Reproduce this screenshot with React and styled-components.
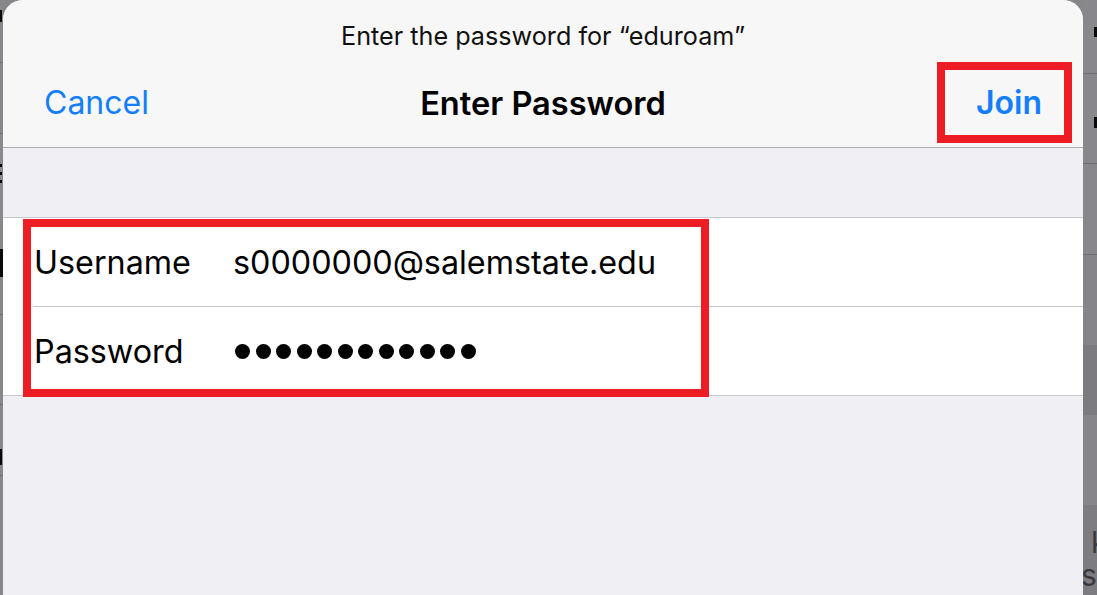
import React from "react";
import styled, { createGlobalStyle } from "styled-components";

const Global = createGlobalStyle`
  html, body { margin: 0; padding: 0; }
  body {
    width: 1097px;
    height: 595px;
    overflow: hidden;
    background: #87878b;
    font-family: Inter, "Liberation Sans", Arial, sans-serif;
    -webkit-font-smoothing: antialiased;
  }
`;

const Screen = styled.div`
  display: flex;
  width: 1097px;
  height: 595px;
`;

const Strip = styled.div`
  display: flex;
  flex-direction: column;
  width: ${(p) => p.$w}px;
  flex: none;
  overflow: hidden;
`;

const StripCell = styled.div`
  height: ${(p) => p.$h}px;
  flex: none;
  background: ${(p) => p.$bg || "#88888c"};
  border-bottom: ${(p) => (p.$line ? "1px solid #6e6e72" : "none")};
  position: relative;
  line-height: 1;
  white-space: nowrap;
`;

const Mark = styled.span`
  position: absolute;
  left: ${(p) => p.$x}px;
  top: ${(p) => p.$y}px;
  width: ${(p) => p.$w}px;
  height: ${(p) => p.$h}px;
  background: #0a0a0a;
`;

const GhostText = styled.span`
  position: absolute;
  left: ${(p) => p.$x}px;
  top: ${(p) => p.$y}px;
  font-size: 30px;
  color: #3a3a3e;
`;

const Sheet = styled.div`
  width: 1080px;
  flex: none;
  height: 595px;
  background: #efeff4;
  border-radius: 20px 20px 0 0;
  overflow: hidden;
  display: flex;
  flex-direction: column;
`;

const Header = styled.header`
  background: #f7f7f7;
  border-bottom: 1px solid #acacb0;
  height: 147px;
  display: flex;
  flex-direction: column;
`;

const Prompt = styled.div`
  text-align: center;
  font-size: 25.2px;
  color: #111;
  padding-top: 21px;
  height: 41px;
  line-height: 30px;
`;

const NavBar = styled.div`
  display: grid;
  grid-template-columns: 1fr auto 1fr;
  align-items: center;
  padding: 0 11px;
`;

const NavButton = styled.button`
  font-family: inherit;
  background: none;
  border: none;
  padding: 0;
  margin-left: 30px;
  font-size: 32px;
  color: #147efb;
  cursor: pointer;
  justify-self: start;
  line-height: 40px;
`;

const Title = styled.h1`
  margin: 0;
  font-size: 32.6px;
  font-weight: 600;
  color: #000;
  line-height: 40px;
`;

const JoinButton = styled.button`
  justify-self: end;
  font-family: inherit;
  box-sizing: border-box;
  width: 135px;
  height: 81px;
  border: 8px solid #ee1c25;
  background: none;
  padding: 0 0 0 31px;
  text-align: left;
  font-size: 32px;
  font-weight: 600;
  color: #147efb;
  cursor: pointer;
`;

const Gap = styled.div`
  height: 69px;
  flex: none;
`;

const List = styled.div`
  position: relative;
  background: #fff;
  border-top: 1px solid #c8c7cc;
  border-bottom: 1px solid #c8c7cc;
`;

const Row = styled.div`
  display: flex;
  align-items: center;
  height: 88px;
  margin-left: 30px;
  border-bottom: ${(p) => (p.$last ? "none" : "1px solid #c8c7cc")};
  font-size: 32.3px;
  color: #000;
`;

const Label = styled.span`
  width: 199px;
  flex: none;
  padding-left: 1px;
`;

const Value = styled.span``;

const Dots = styled.span`
  display: flex;
  gap: 5.5px;
  padding-left: 2px;
`;

const Dot = styled.span`
  width: 15px;
  height: 15px;
  border-radius: 50%;
  background: #000;
`;

const Highlight = styled.div`
  position: absolute;
  left: 20px;
  top: 1px;
  width: 686px;
  height: 178px;
  box-sizing: border-box;
  border: 8px solid #ee1c25;
  pointer-events: none;
`;

export default function App() {
  return (
    <>
      <Global />
      <Screen>
        <Strip $w={3}>
          <StripCell $h={62} $line>
            <Mark $x={0} $y={10} $w={2} $h={12} />
          </StripCell>
          <StripCell $h={70} $line />
          <StripCell $h={85} $bg="#8a8a8e">
            <Mark $x={0} $y={30} $w={2} $h={3} />
            <Mark $x={0} $y={38} $w={2} $h={3} />
            <Mark $x={0} $y={46} $w={2} $h={3} />
          </StripCell>
          <StripCell $h={95} $line>
            <Mark $x={0} $y={30} $w={3} $h={28} />
          </StripCell>
          <StripCell $h={89} $line />
          <StripCell $h={70} $line>
            <Mark $x={0} $y={44} $w={2} $h={16} />
          </StripCell>
          <StripCell $h={124} />
        </Strip>
        <Sheet>
          <Header>
            <Prompt>Enter the password for “eduroam”</Prompt>
            <NavBar>
              <NavButton>Cancel</NavButton>
              <Title>Enter Password</Title>
              <JoinButton>Join</JoinButton>
            </NavBar>
          </Header>
          <Gap />
          <List>
            <Row>
              <Label>Username</Label>
              <Value>s0000000@salemstate.edu</Value>
            </Row>
            <Row $last>
              <Label>Password</Label>
              <Dots>
                {Array.from({ length: 12 }).map((_, i) => (
                  <Dot key={i} />
                ))}
              </Dots>
            </Row>
            <Highlight />
          </List>
        </Sheet>
        <Strip $w={14}>
          <StripCell $h={73} $line>
            <Mark $x={11} $y={27} $w={3} $h={10} />
          </StripCell>
          <StripCell $h={89} $line>
            <Mark $x={11} $y={43} $w={3} $h={11} />
          </StripCell>
          <StripCell $h={90} $line />
          <StripCell $h={90} $bg="#858589" />
          <StripCell $h={70} $bg="#7c7c80" />
          <StripCell $h={90} $bg="#86868a" />
          <StripCell $h={93} $bg="#7d7d81">
            <GhostText $x={8} $y={22}>k</GhostText>
            <GhostText $x={-2} $y={55}>se</GhostText>
          </StripCell>
        </Strip>
      </Screen>
    </>
  );
}
